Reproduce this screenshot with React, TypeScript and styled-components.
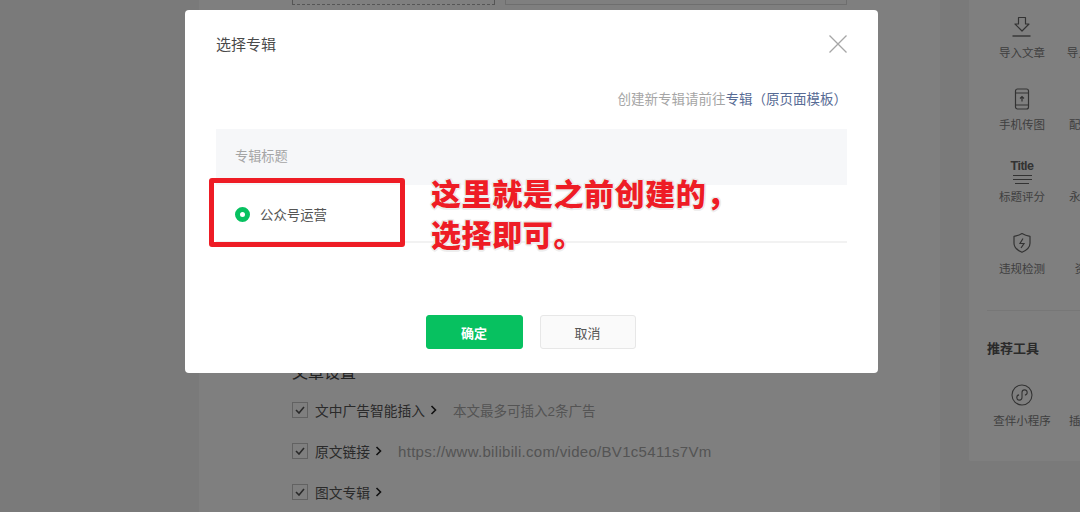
import styled, { createGlobalStyle } from 'styled-components';

const GlobalStyle = createGlobalStyle`
  html, body {
    margin: 0;
    padding: 0;
    height: 100%;
    overflow: hidden;
  }
  body {
    font-family: "Liberation Sans", "Noto Sans CJK SC", sans-serif;
  }
`;

const Page = styled.div`
  display: flex;
  width: 1080px;
  height: 512px;
  overflow: hidden;
  background: #f5f5f5;
`;

const Main = styled.main`
  flex: none;
  width: 741px;
  margin-left: 199px;
  padding-left: 93px;
  box-sizing: border-box;
  background: #fff;
`;

const CoverRow = styled.div`
  display: flex;
  gap: 10px;
  height: 5px;
`;

const CoverBox = styled.div<{ $dashed?: boolean }>`
  width: ${p => (p.$dashed ? '201px' : '340px')};
  border: 1px ${p => (p.$dashed ? 'dashed #aaa' : 'solid #ddd')};
  border-top: 0;
`;

const SettingsTitle = styled.h3`
  margin: 356px 0 0;
  font-size: 16px;
  line-height: 24px;
  font-weight: 400;
  color: #444;
`;

const SettingsRows = styled.div`
  display: flex;
  flex-direction: column;
  gap: 20.7px;
  margin-top: 15.4px;
`;

const SettingRow = styled.div`
  display: flex;
  align-items: center;
  height: 20px;
`;

const CheckBox = styled.span`
  display: flex;
  align-items: center;
  justify-content: center;
  width: 14px;
  height: 14px;
  border: 1px solid #c4c4c4;
  color: #555;
  margin-right: 7px;
`;

const SettingLabel = styled.span`
  font-size: 13.75px;
  color: #555;
`;

const Chevron = styled.svg`
  width: 7px;
  height: 10px;
  margin-left: 5px;
  color: #222;
`;

const SettingHint = styled.span<{ $spread?: boolean }>`
  margin-left: 16px;
  font-size: ${p => (p.$spread ? '15px' : '13.5px')};
  letter-spacing: ${p => (p.$spread ? '0.3px' : '0')};
  color: #a8a8a8;
`;

const Side = styled.aside`
  flex: none;
  width: 180px;
  height: 461px;
  margin-left: 29px;
  padding: 15px 0 0 18px;
  box-sizing: border-box;
  background: #fff;
  border-radius: 0 0 0 2px;
`;

const ToolGrid = styled.div`
  display: grid;
  grid-template-columns: repeat(2, 70px);
  grid-auto-rows: 72px;
`;

const Tool = styled.div`
  display: flex;
  flex-direction: column;
  align-items: center;
`;

const ToolIcon = styled.div`
  display: flex;
  align-items: center;
  justify-content: center;
  width: 28px;
  height: 24px;
  color: #666;
`;

const ToolLabel = styled.span`
  margin-top: 5px;
  font-size: 11.5px;
  line-height: 18px;
  white-space: nowrap;
  color: #808080;
`;

const TitleIcon = styled.div`
  display: flex;
  flex-direction: column;
  align-items: center;
  width: 24px;
  margin-top: 3px;
  font-size: 12.5px;
  line-height: 11px;
  font-weight: 700;
  letter-spacing: -0.5px;
  color: #666;
  i {
    display: block;
    height: 1px;
    margin-top: 3px;
    background: #666;
    width: 19px;
  }
  i:last-child {
    width: 14px;
  }
`;

const SideDivider = styled.div`
  width: 130px;
  height: 1px;
  margin-top: 7px;
  background: #eee;
`;

const SideTitle = styled.h4`
  margin: 28px 0 0;
  font-size: 13px;
  line-height: 20px;
  font-weight: 700;
  color: #555;
`;

const RecommendGrid = styled(ToolGrid)`
  margin-top: 24px;
  grid-auto-rows: 60px;
`;

const Overlay = styled.div`
  position: fixed;
  inset: 0;
  padding: 10px 0 0 185px;
  background: rgba(0, 0, 0, 0.5);
`;

const Dialog = styled.section`
  position: relative;
  display: flex;
  flex-direction: column;
  width: 693px;
  height: 363px;
  padding: 0 31px;
  box-sizing: border-box;
  background: #fff;
  border-radius: 4px;
  font-family: "Noto Sans CJK SC", sans-serif;
`;

const DialogHeader = styled.header`
  display: flex;
  align-items: center;
  justify-content: space-between;
  height: 68px;
`;

const DialogTitle = styled.h2`
  margin: 0 0 2px;
  font-size: 15px;
  font-weight: 400;
  color: #4a4a4a;
`;

const CloseIcon = styled.svg`
  width: 18px;
  height: 18px;
  color: #a6a6a6;
`;

const CreateHint = styled.p`
  margin: 10px 0 0;
  font-size: 13.5px;
  line-height: 20px;
  text-align: right;
  color: #a5a5a5;
  a {
    color: #576b95;
    text-decoration: none;
  }
`;

const TableHead = styled.div`
  display: flex;
  align-items: center;
  height: 56px;
  margin-top: 21px;
  padding: 0 0 3px 19px;
  box-sizing: border-box;
  font-size: 13.2px;
  color: #a5a5a5;
  background: #f6f7f9;
`;

const TableRow = styled.div`
  display: flex;
  align-items: center;
  gap: 10px;
  height: 58px;
  padding: 1px 0 0 19px;
  box-sizing: border-box;
  border-bottom: 2px solid #f2f2f2;
  font-size: 13.4px;
  color: #555;
`;

const Radio = styled.span`
  width: 5px;
  height: 5px;
  margin-top: 1px;
  border: 5px solid #07c160;
  border-radius: 50%;
  background: #fff;
`;

const DialogFooter = styled.footer`
  display: flex;
  justify-content: center;
  gap: 17px;
  margin: 72px 2px 0 0;
`;

const Button = styled.button<{ $primary?: boolean }>`
  width: ${p => (p.$primary ? '97px' : '96px')};
  height: 34px;
  padding: 0;
  border: 1px solid ${p => (p.$primary ? '#07c160' : '#e7e7e7')};
  border-radius: 3px;
  background: ${p => (p.$primary ? '#07c160' : '#fafafa')};
  color: ${p => (p.$primary ? '#fff' : '#555')};
  font-family: inherit;
  font-size: 13px;
  font-weight: ${p => (p.$primary ? 700 : 400)};
`;

const RedFrame = styled.div`
  position: absolute;
  left: 24px;
  top: 168px;
  width: 196px;
  height: 69px;
  box-sizing: border-box;
  border: 5px solid #ee1c25;
  border-radius: 3px;
`;

const Annotation = styled.div`
  position: absolute;
  left: 246px;
  top: 162px;
  font-size: 30px;
  line-height: 41px;
  font-weight: 900;
  letter-spacing: 0.6px;
  white-space: nowrap;
  color: #ee1c25;
  text-shadow: 1.5px 0 0 #eee, -1.5px 0 0 #eee, 0 1.5px 0 #eee, 0 -1.5px 0 #eee,
    1px 1px 1px #ddd, -1px 1px 1px #ddd, 1px -1px 1px #ddd, -1px -1px 1px #ddd;
`;

const Icons = {
  Import: (
    <svg width="22" height="22" viewBox="0 0 22 22" fill="none" stroke="currentColor" strokeWidth="1.2">
      <path d="M7.5 1.5h7v6.5h3.5l-7 7-7-7h3.5z" strokeLinejoin="round" />
      <path d="M1.5 20h18" strokeWidth="1.4" />
    </svg>
  ),
  Phone: (
    <svg width="16" height="24" viewBox="0 0 16 24" fill="none" stroke="currentColor" strokeWidth="1.2">
      <rect x="1.5" y="2" width="13" height="20" rx="2" />
      <path d="M1.5 6h13M1.5 18h13" />
      <path d="M8 14.5v-5M6 11.5l2-2 2 2" />
    </svg>
  ),
  Shield: (
    <svg width="20" height="22" viewBox="0 0 20 22" fill="none" stroke="currentColor" strokeWidth="1.2">
      <path d="M10 1.5c2.4 1.500 5 2.400 8 2.800v7c0 4-3.400 7-8 9-4.600-2-8-5-8-9v-7c3-.4 5.600-1.300 8-2.800z" strokeLinejoin="round" />
      <path d="M11 6.500l-3 5h4l-3 4.500" />
    </svg>
  ),
  MiniProgram: (
    <svg width="22" height="22" viewBox="0 0 22 22" fill="none" stroke="currentColor" strokeWidth="1.1">
      <circle cx="11" cy="11" r="10" />
      <path d="M8.100 10.900A2.600 2.600 0 1 0 11 13.500V8.500A2.600 2.600 0 1 1 13.900 11.100" />
    </svg>
  ),
};

const Check = () => (
  <svg width="10" height="8" viewBox="0 0 10 8" fill="none" stroke="currentColor" strokeWidth="1.6">
    <path d="M1 4l3 3 5-6" />
  </svg>
);

const Arrow = () => (
  <Chevron viewBox="0 0 7 10" fill="none" stroke="currentColor" strokeWidth="1.6">
    <path d="M1.500 1l4 4-4 4" />
  </Chevron>
);

const tools = [
  { label: '导入文章', icon: Icons.Import },
  { label: '导入Word', icon: null },
  { label: '手机传图', icon: Icons.Phone },
  { label: '配图中心', icon: null },
  {
    label: '标题评分',
    icon: (
      <TitleIcon>
        Title
        <i />
        <i />
        <i />
      </TitleIcon>
    ),
  },
  { label: '永久链接', icon: null },
  { label: '违规检测', icon: Icons.Shield },
  { label: '资源库', icon: null },
];

const recommended = [
  { label: '查伴小程序', icon: Icons.MiniProgram },
  { label: '插入音乐', icon: null },
];

const settings = [
  { label: '文中广告智能插入', hint: '本文最多可插入2条广告' },
  { label: '原文链接', hint: 'https://www.bilibili.com/video/BV1c5411s7Vm', spread: true },
  { label: '图文专辑' },
];

function App() {
  return (
    <>
      <GlobalStyle />
      <Page>
        <Main>
          <CoverRow>
            <CoverBox $dashed />
            <CoverBox />
          </CoverRow>
          <SettingsTitle>文章设置</SettingsTitle>
          <SettingsRows>
            {settings.map(item => (
              <SettingRow key={item.label}>
                <CheckBox>
                  <Check />
                </CheckBox>
                <SettingLabel>{item.label}</SettingLabel>
                <Arrow />
                {item.hint && <SettingHint $spread={item.spread}>{item.hint}</SettingHint>}
              </SettingRow>
            ))}
          </SettingsRows>
        </Main>
        <Side>
          <ToolGrid>
            {tools.map(tool => (
              <Tool key={tool.label}>
                <ToolIcon>{tool.icon}</ToolIcon>
                <ToolLabel>{tool.label}</ToolLabel>
              </Tool>
            ))}
          </ToolGrid>
          <SideDivider />
          <SideTitle>推荐工具</SideTitle>
          <RecommendGrid>
            {recommended.map(tool => (
              <Tool key={tool.label}>
                <ToolIcon>{tool.icon}</ToolIcon>
                <ToolLabel>{tool.label}</ToolLabel>
              </Tool>
            ))}
          </RecommendGrid>
        </Side>
      </Page>
      <Overlay>
        <Dialog>
          <DialogHeader>
            <DialogTitle>选择专辑</DialogTitle>
            <CloseIcon viewBox="0 0 18 18" fill="none" stroke="currentColor" strokeWidth="1.3">
              <path d="M.5.5l17 17M17.500.5l-17 17" />
            </CloseIcon>
          </DialogHeader>
          <CreateHint>
            创建新专辑请前往<a href="#album">专辑（原页面模板）</a>
          </CreateHint>
          <TableHead>专辑标题</TableHead>
          <TableRow>
            <Radio />
            公众号运营
          </TableRow>
          <DialogFooter>
            <Button $primary>确定</Button>
            <Button>取消</Button>
          </DialogFooter>
          <RedFrame />
          <Annotation>
            这里就是之前创建的，
            <br />
            选择即可。
          </Annotation>
        </Dialog>
      </Overlay>
    </>
  );
}

export default App;
